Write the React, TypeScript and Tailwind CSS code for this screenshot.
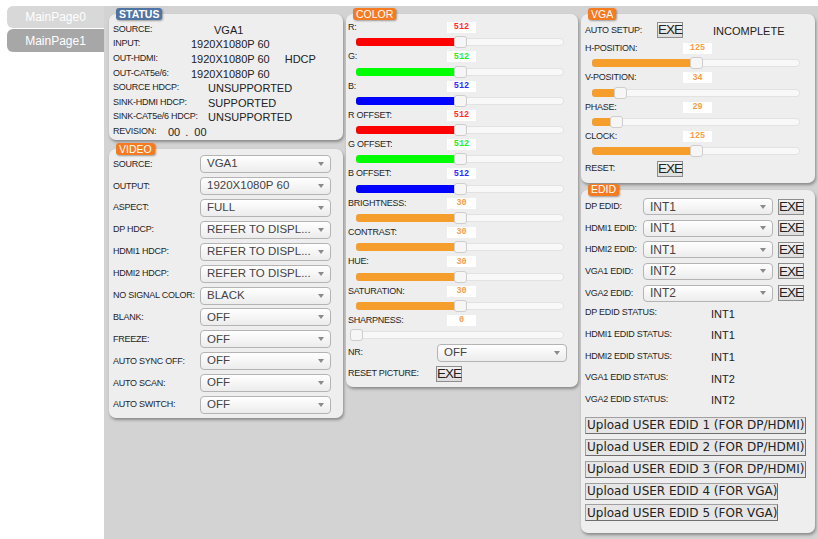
import React from 'react';

// Control page for the scaler: status, video, colour, VGA and EDID panels.

type Tone = 'red' | 'green' | 'blue' | 'orange';

const fillTone: Record<Tone, string> = {
  red: 'bg-[#ff0000]',
  green: 'bg-[#00ff00]',
  blue: 'bg-[#0000ff]',
  orange: 'bg-[#f59e2c]',
};

const textTone: Record<Tone, string> = {
  red: 'text-[#ff2a2a]',
  green: 'text-[#22ee22]',
  blue: 'text-[#2a2aff]',
  orange: 'text-[#f2a048]',
};

function Label({ children, className = '' }: { children: React.ReactNode; className?: string }) {
  return (
    <span
      className={`shrink-0 text-[9px] leading-none tracking-[-0.25px] whitespace-nowrap text-[#1f1f1f] ${className}`}
    >
      {children}
    </span>
  );
}

function Panel({
  title,
  badge,
  className = '',
  children,
}: {
  title: string;
  badge: string;
  className?: string;
  children: React.ReactNode;
}) {
  return (
    <section
      className={`relative rounded-[7px] bg-[#eeeeee] shadow-[1px_2px_3px_rgba(0,0,0,0.35)] ${className}`}
    >
      <span
        className={`absolute -top-[6px] left-[7px] flex h-[12px] items-center rounded-[3px] px-[3px] text-[10.5px] leading-none text-white shadow-[1px_1px_2px_rgba(0,0,0,0.35)] ${badge}`}
      >
        {title}
      </span>
      {children}
    </section>
  );
}

function Select({ value, className = '' }: { value: string; className?: string }) {
  return (
    <div
      className={`flex shrink-0 items-center rounded-[4px] border border-[#b4b4b4] bg-linear-to-b from-white to-[#ececec] pl-[6px] pr-[6px] text-[#444] ${className}`}
    >
      <span className="whitespace-nowrap leading-none">{value}</span>
      <span className="ml-auto h-0 w-0 border-x-[3px] border-t-[4px] border-x-transparent border-t-[#8a8a8a]" />
    </div>
  );
}

function ExeButton() {
  return (
    <button className="flex h-[16px] w-[26px] shrink-0 items-center justify-center border border-[#8d8d8d] bg-linear-to-b from-[#f2f2f2] to-[#dddddd] text-[13.5px] leading-none tracking-[-1px] text-[#222]">
      EXE
    </button>
  );
}

function Slider({ pct, tone, className = '' }: { pct: number; tone: Tone; className?: string }) {
  return (
    <div
      className={`relative h-[8px] w-[208px] rounded-[4px] bg-[#f8f8f8] shadow-[inset_0_0_0_1px_#e2e2e2] ${className}`}
    >
      <div className={`h-full rounded-l-[3px] ${fillTone[tone]}`} style={{ width: `${pct}%` }} />
      <div
        className="absolute top-1/2 -ml-[6.5px] h-[12px] w-[13px] -translate-y-1/2 rounded-[3px] border border-[#cdcdcd] bg-[#f6f6f6]"
        style={{ left: `${pct}%` }}
      />
    </div>
  );
}

function SliderRow({
  label,
  value,
  pct,
  tone,
  labelCol,
  trackOffset,
}: {
  label: string;
  value: string;
  pct: number;
  tone: Tone;
  labelCol: string;
  trackOffset: string;
}) {
  return (
    <div className="h-[29.3px]">
      <div className="flex h-[12px] items-center">
        <Label className={labelCol}>{label}</Label>
        <span
          className={`flex h-[11px] w-[29px] items-center justify-center bg-white font-['Liberation_Mono',monospace] text-[8.5px] font-bold leading-none ${textTone[tone]}`}
        >
          {value}
        </span>
      </div>
      <Slider pct={pct} tone={tone} className={`mt-[4.8px] ${trackOffset}`} />
    </div>
  );
}

const statusRows = [
  { label: 'SOURCE:', value: 'VGA1', col: 'w-[101px]' },
  { label: 'INPUT:', value: '1920X1080P 60', col: 'w-[78px]' },
  { label: 'OUT-HDMI:', value: '1920X1080P 60', col: 'w-[78px]', extra: 'HDCP' },
  { label: 'OUT-CAT5e/6:', value: '1920X1080P 60', col: 'w-[78px]' },
  { label: 'SOURCE HDCP:', value: 'UNSUPPORTED', col: 'w-[95px]' },
  { label: 'SINK-HDMI HDCP:', value: 'SUPPORTED', col: 'w-[95px]' },
  { label: 'SINK-CAT5e/6 HDCP:', value: 'UNSUPPORTED', col: 'w-[95px]' },
];

const videoRows = [
  ['SOURCE:', 'VGA1'],
  ['OUTPUT:', '1920X1080P 60'],
  ['ASPECT:', 'FULL'],
  ['DP HDCP:', 'REFER TO DISPL...'],
  ['HDMI1 HDCP:', 'REFER TO DISPL...'],
  ['HDMI2 HDCP:', 'REFER TO DISPL...'],
  ['NO SIGNAL COLOR:', 'BLACK'],
  ['BLANK:', 'OFF'],
  ['FREEZE:', 'OFF'],
  ['AUTO SYNC OFF:', 'OFF'],
  ['AUTO SCAN:', 'OFF'],
  ['AUTO SWITCH:', 'OFF'],
];

const colorRows: { label: string; value: string; pct: number; tone: Tone }[] = [
  { label: 'R:', value: '512', pct: 50, tone: 'red' },
  { label: 'G:', value: '512', pct: 50, tone: 'green' },
  { label: 'B:', value: '512', pct: 50, tone: 'blue' },
  { label: 'R OFFSET:', value: '512', pct: 50, tone: 'red' },
  { label: 'G OFFSET:', value: '512', pct: 50, tone: 'green' },
  { label: 'B OFFSET:', value: '512', pct: 50, tone: 'blue' },
  { label: 'BRIGHTNESS:', value: '30', pct: 50, tone: 'orange' },
  { label: 'CONTRAST:', value: '30', pct: 50, tone: 'orange' },
  { label: 'HUE:', value: '30', pct: 50, tone: 'orange' },
  { label: 'SATURATION:', value: '30', pct: 50, tone: 'orange' },
  { label: 'SHARPNESS:', value: '0', pct: 0, tone: 'orange' },
];

const vgaRows = [
  { label: 'H-POSITION:', value: '125', pct: (125 / 250) * 100 },
  { label: 'V-POSITION:', value: '34', pct: (34 / 250) * 100 },
  { label: 'PHASE:', value: '29', pct: (29 / 250) * 100 },
  { label: 'CLOCK:', value: '125', pct: (125 / 250) * 100 },
];

const edidSelects = [
  ['DP EDID:', 'INT1'],
  ['HDMI1 EDID:', 'INT1'],
  ['HDMI2 EDID:', 'INT1'],
  ['VGA1 EDID:', 'INT2'],
  ['VGA2 EDID:', 'INT2'],
];

const edidStatus = [
  ['DP EDID STATUS:', 'INT1'],
  ['HDMI1 EDID STATUS:', 'INT1'],
  ['HDMI2 EDID STATUS:', 'INT1'],
  ['VGA1 EDID STATUS:', 'INT2'],
  ['VGA2 EDID STATUS:', 'INT2'],
];

const uploads = [
  { text: 'Upload USER EDID 1 (FOR DP/HDMI)', w: 'w-[221px]' },
  { text: 'Upload USER EDID 2 (FOR DP/HDMI)', w: 'w-[221px]' },
  { text: 'Upload USER EDID 3 (FOR DP/HDMI)', w: 'w-[221px]' },
  { text: 'Upload USER EDID 4 (FOR VGA)', w: 'w-[193px]' },
  { text: 'Upload USER EDID 5 (FOR VGA)', w: 'w-[193px]' },
];

export default function App() {
  return (
    <div className="flex min-h-screen w-full bg-white pt-[6px] font-['Liberation_Sans',Arial,sans-serif]">
      {/* ---- Page tabs ---- */}
      <nav className="w-[104px] shrink-0 pl-[7px]">
        <div className="flex h-[22px] items-center justify-center rounded-l-[6px] bg-[#d8d8d8] text-[12px] text-white">
          MainPage0
        </div>
        <div className="mt-[1px] flex h-[23px] items-center justify-center rounded-l-[6px] bg-[#a7a7a7] text-[12px] text-white">
          MainPage1
        </div>
      </nav>

      {/* ---- Panels ---- */}
      <main className="flex h-[533px] flex-1 gap-[3px] bg-[#d3d3d3] pl-[5px] pt-[8px]">
        {/* Left column: status + video */}
        <div className="flex w-[234px] flex-col gap-[9px]">
          <Panel title="STATUS" badge="bg-[#4f73a3] font-bold" className="pb-[1px] pl-[4px] pt-[8px]">
            {statusRows.map((r) => (
              <div key={r.label} className="flex h-[14.6px] items-center">
                <Label className={r.col}>{r.label}</Label>
                <span className="mt-[2px] text-[11px] leading-none text-[#222]">{r.value}</span>
                {r.extra && <span className="ml-[15px] mt-[2px] text-[11px] leading-none text-[#222]">{r.extra}</span>}
              </div>
            ))}
            <div className="flex h-[14.6px] items-center">
              <Label className="w-[55px]">REVISION:</Label>
              <span className="mt-[2px] text-[11px] leading-none text-[#222]">00</span>
              <span className="ml-[5px] mt-[2px] text-[11px] leading-none text-[#222]">.</span>
              <span className="ml-[6px] mt-[2px] text-[11px] leading-none text-[#222]">00</span>
            </div>
          </Panel>

          <Panel title="VIDEO" badge="bg-[#f47b20]" className="pb-[2.5px] pl-[4px] pt-[4.5px]">
            {videoRows.map(([label, value]) => (
              <div key={label} className="flex h-[21.9px] items-center">
                <Label className="w-[87px]">{label}</Label>
                <Select value={value} className="h-[18px] w-[131px] text-[11.5px]" />
              </div>
            ))}
          </Panel>
        </div>

        {/* Middle column: colour */}
        <div className="w-[232px]">
          <Panel title="COLOR" badge="bg-[#f47b20]" className="pb-[5px] pl-[2px] pt-[7.5px]">
            {colorRows.map((r) => (
              <SliderRow
                key={r.label}
                label={r.label}
                value={r.value}
                pct={r.pct}
                tone={r.tone}
                labelCol="w-[99px]"
                trackOffset="ml-[8px]"
              />
            ))}
            <div className="flex h-[18px] items-center">
              <Label className="w-[89px]">NR:</Label>
              <Select value="OFF" className="h-[18px] w-[130px] text-[11.5px]" />
            </div>
            <div className="mt-[4px] flex h-[16px] items-center">
              <Label className="w-[88px]">RESET PICTURE:</Label>
              <ExeButton />
            </div>
          </Panel>
        </div>

        {/* Right column: VGA + EDID */}
        <div className="flex w-[234px] flex-col gap-[7px]">
          <Panel title="VGA" badge="bg-[#f47b20]" className="pb-[6px] pl-[4px] pt-[8px]">
            <div className="flex h-[16px] items-center">
              <Label className="w-[72px]">AUTO SETUP:</Label>
              <ExeButton />
              <span className="ml-[30px] mt-[2px] text-[11px] leading-none text-[#222]">INCOMPLETE</span>
            </div>
            <div className="mt-[4.5px]">
              {vgaRows.map((r) => (
                <SliderRow
                  key={r.label}
                  label={r.label}
                  value={r.value}
                  pct={r.pct}
                  tone="orange"
                  labelCol="w-[98px]"
                  trackOffset="ml-[7px]"
                />
              ))}
            </div>
            <div className="mt-[1px] flex h-[16px] items-center">
              <Label className="w-[72px]">RESET:</Label>
              <ExeButton />
            </div>
          </Panel>

          <Panel title="EDID" badge="bg-[#f47b20]" className="pb-[12px] pl-[4px] pt-[6px]">
            {edidSelects.map(([label, value]) => (
              <div key={label} className="flex h-[21.65px] items-center">
                <Label className="w-[58px]">{label}</Label>
                <Select value={value} className="h-[17px] w-[130px] text-[12px]" />
                <span className="ml-[5px]">
                  <ExeButton />
                </span>
              </div>
            ))}
            <div className="-mt-[2px]">
              {edidStatus.map(([label, value]) => (
                <div key={label} className="flex h-[21.7px] items-center">
                  <Label className="w-[126px]">{label}</Label>
                  <span className="mt-[3px] text-[11px] leading-none text-[#222]">{value}</span>
                </div>
              ))}
            </div>
            <div className="mt-[6.5px] flex flex-col gap-[4.9px]">
              {uploads.map((u) => (
                <button
                  key={u.text}
                  className={`flex h-[17px] items-center whitespace-nowrap border border-[#a0a0a0] border-b-[#6f6f6f] border-r-[#6f6f6f] bg-[#e6e6e6] pl-[1px] text-left font-['DejaVu_Sans',sans-serif] text-[12px] leading-none text-[#222] ${u.w}`}
                >
                  {u.text}
                </button>
              ))}
            </div>
          </Panel>
        </div>
      </main>
    </div>
  );
}
